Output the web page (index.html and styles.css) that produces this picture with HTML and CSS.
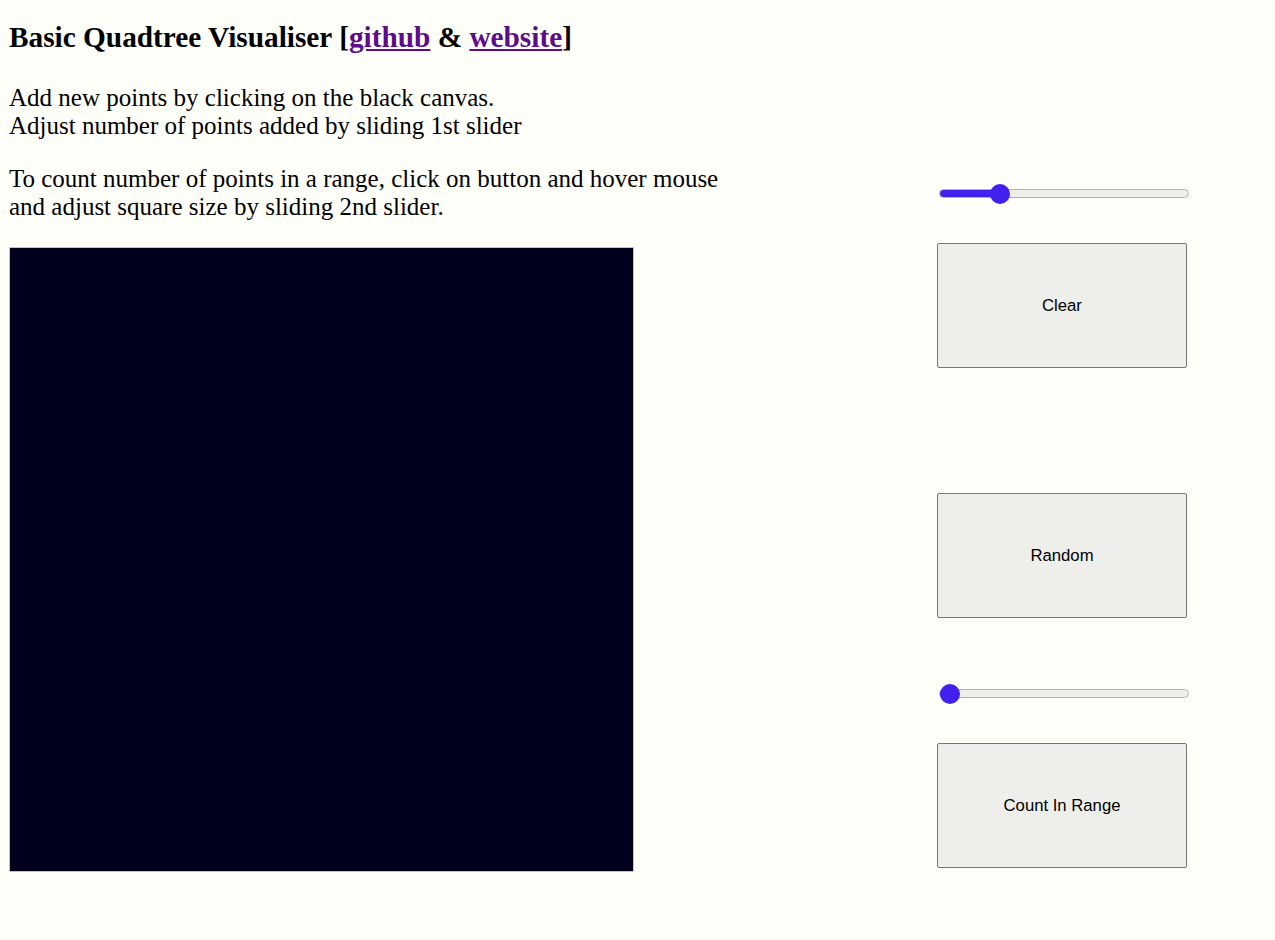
FILE: index.html
```html
<!DOCTYPE html>
<html>
<head>
<meta charset="utf-8">
<link rel="stylesheet" href="styles.css">
</head>
<body>
<div class="layout">
  <div class="left">
    <h2 class="title">Basic Quadtree Visualiser [<a href="#">github</a> &amp; <a href="#">website</a>]</h2>
    <p class="info">Add new points by clicking on the black canvas.<br>Adjust number of points added by sliding 1st slider</p>
    <p class="info">To count number of points in a range, click on button and hover mouse<br>and adjust square size by sliding 2nd slider.</p>
    <div class="canvas"></div>
  </div>
  <div class="right">
    <input class="slider slider-first" type="range" min="0" max="100" value="22" style="--fill: 61px">
    <button class="btn btn-clear">Clear</button>
    <button class="btn btn-random">Random</button>
    <input class="slider slider-second" type="range" min="0" max="100" value="0" style="--fill: 10px">
    <button class="btn btn-count">Count In Range</button>
  </div>
</div>
</body>
</html>
```
FILE: styles.css
```css
html, body {
  background: #fffffa;
}
body {
  margin: 8px;
  font-family: "Liberation Serif", "Times New Roman", serif;
  color: #000;
}
.layout {
  display: grid;
  grid-template-columns: 929px 250px;
}
.left {
  display: flex;
  flex-direction: column;
  align-items: flex-start;
}
.title {
  font-size: 29.3px;
  font-weight: bold;
  line-height: 34px;
  margin: 12px 0 0 1px;
}
.title a {
  color: #5c0d8b;
  text-decoration: underline;
}
.info {
  font-size: 25px;
  line-height: 28px;
  margin: 0 0 0 1px;
}
.title + .info {
  margin-top: 30px;
}
.info + .info {
  margin-top: 25px;
}
.canvas {
  width: 623px;
  height: 623px;
  margin: 26px 0 0 1px;
  background: #00001e;
  border: 1px solid #c4c4d0;
}
.right {
  display: flex;
  flex-direction: column;
  align-items: flex-start;
}
.slider {
  -webkit-appearance: none;
  appearance: none;
  width: 250px;
  height: 20px;
  margin: 0 0 0 2px;
  padding: 0;
  background: transparent;
}
.slider::-webkit-slider-runnable-track {
  height: 9px;
  box-sizing: border-box;
  border: 1px solid #b2b2b2;
  border-radius: 5px;
  background: linear-gradient(to right, #4420ee 0, #4420ee var(--fill), #eeeeeb var(--fill));
}
.slider::-webkit-slider-thumb {
  -webkit-appearance: none;
  appearance: none;
  width: 20px;
  height: 20px;
  margin-top: -6px;
  border: none;
  border-radius: 50%;
  background: #4420ee;
}
.slider-first {
  margin-top: 175px;
}
.btn {
  width: 250px;
  height: 125px;
  background: #eeeeeb;
  border: 1px solid #767676;
  border-radius: 2px;
  font-family: "Liberation Sans", Arial, sans-serif;
  font-size: 16.7px;
  color: #000;
  padding: 0;
}
.btn-clear {
  margin-top: 40px;
}
.btn-random {
  margin-top: 125px;
}
.slider-second {
  margin-top: 65px;
}
.btn-count {
  margin-top: 40px;
}
```
